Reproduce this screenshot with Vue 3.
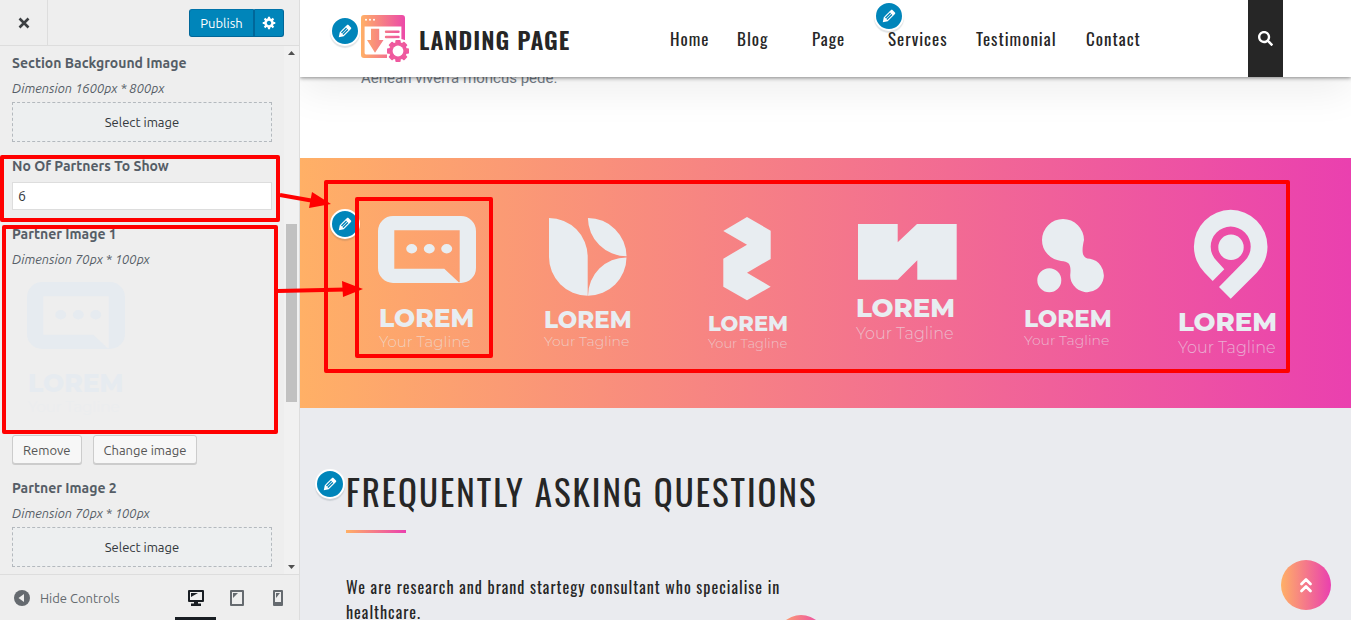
<script setup>
import { ref } from 'vue'

const partnerCount = ref('6')

const navLinks = ['Home', 'Blog', 'Page', 'Services', 'Testimonial', 'Contact']

const pencil =
  'M13.89 3.39l2.71 2.72c.46.46.42 1.24.03 1.64l-8.01 8.02-5.56 1.16 1.16-5.58s7.6-7.63 7.99-8.03c.39-.39 1.22-.39 1.68.07zm-2.73 2.79l-5.59 5.61 1.11 1.11 5.54-5.65zm-2.97 8.23l5.58-5.6-1.07-1.08-5.59 5.6z'

const chatShape =
  'M46 18H114A15 15 0 0 1 129 33V70A15 15 0 0 1 114 85H46A15 15 0 0 1 31 70V33A15 15 0 0 1 46 18ZM47.3 32.3V70.7H97.3L112 84.6L112.7 84V32.3Z M59.2 50.7a5.5 4.7 0 1 0 11 0a5.5 4.7 0 1 0 -11 0Z M76.8 50.7a5.5 4.7 0 1 0 11 0a5.5 4.7 0 1 0 -11 0Z M94.2 50.7a5.5 4.7 0 1 0 11 0a5.5 4.7 0 1 0 -11 0Z'

const partners = [
  { shape: chatShape, x: 32, nameY: 129, nameSize: 25, tagY: 149, tagSize: 15 },
  {
    shape:
      'M42 20A38.7 38.7 0 0 1 80.7 58.7V97.7A38.7 38.7 0 0 1 42 58.7Z M80.9 20A38.5 38.5 0 0 1 119.5 58.2A38.5 38.5 0 0 1 80.9 20Z M119.5 59.4A38.5 38.5 0 0 1 81 97.7A38.5 38.5 0 0 1 119.5 59.4Z',
    x: 37, nameY: 130, nameSize: 23, tagY: 148, tagSize: 14
  },
  {
    shape:
      'M80 19L103.7 32.7V61L80 74.7L103.7 88.7L80 102.3L56.3 88.7V60.7L80 46.7L56.3 33Z',
    x: 41, nameY: 133, nameSize: 21, tagY: 150, tagSize: 13
  },
  {
    shape:
      'M31 26H70.7V44.3L90 26H129.7V81.7H90.3V62.3L70.7 81.7H31Z',
    x: 29, nameY: 119, nameSize: 26, tagY: 141, tagSize: 16
  },
  {
    shape:
      'M55 42a21 21 0 1 1 42 0C94.5 53 94.5 60.5 103 60.8A16.8 16.8 0 1 1 83.4 75C84 66 82 63.5 74 62.9A21 21 0 0 1 55 42Z M50.3 82.3a12 12 0 1 0 24 0a12 12 0 1 0 -24 0Z',
    x: 37, nameY: 129, nameSize: 23, tagY: 147, tagSize: 14
  },
  {
    shape:
      'M83.7 100.7L72 89L97.8 62.8A20 20 0 1 0 69.6 62.8L77.3 71.3L65.7 83L57.7 74.7A36.8 36.8 0 1 1 109.7 74.7Z M71.3 49.3a12.7 12.7 0 1 0 25.4 0a12.7 12.7 0 1 0 -25.4 0Z',
    x: 31, nameY: 133, nameSize: 26, tagY: 155, tagSize: 16
  }
]

const gearTeeth = [0, 45, 90, 135, 180, 225, 270, 315]
</script>

<template>
  <div class="customizer">
    <aside class="sidebar">
      <header class="sidebar-head">
        <button class="close" type="button" aria-label="Close">
          <svg width="12" height="12" viewBox="0 0 12 12"><path d="M1.5 1.5L10.5 10.5M10.5 1.5L1.5 10.5" stroke="#3c3f42" stroke-width="2.6" /></svg>
        </button>
        <div class="publish-group">
          <button class="publish" type="button">Publish</button>
          <button class="settings" type="button" aria-label="Publish settings">
            <svg width="14" height="14" viewBox="0 1 19 19"><path fill="#fff" d="M18 12h-2.18c-.17.7-.44 1.35-.81 1.93l1.54 1.54-2.1 2.1-1.54-1.54c-.58.36-1.23.63-1.91.79V19H8v-2.18c-.68-.16-1.33-.43-1.91-.79l-1.54 1.54-2.12-2.12 1.54-1.54c-.36-.58-.63-1.23-.79-1.91H1V9.03h2.17c.16-.7.44-1.35.8-1.94L2.43 5.55l2.1-2.1 1.54 1.54c.58-.37 1.24-.64 1.93-.81V2h3v2.18c.68.16 1.33.43 1.91.79l1.54-1.54 2.12 2.12-1.54 1.54c.36.59.64 1.24.8 1.94H18V12zm-8.5 1.5c1.66 0 3-1.34 3-3s-1.34-3-3-3-3 1.34-3 3 1.34 3 3 3z" /></svg>
          </button>
        </div>
      </header>

      <div class="sidebar-body">
        <div class="controls">
          <section class="control">
            <h3>Section Background Image</h3>
            <p class="hint">Dimension 1600px * 800px</p>
            <button class="select-image" type="button">Select image</button>
          </section>
          <section class="control">
            <label class="title" for="partner-count">No Of Partners To Show</label>
            <input id="partner-count" v-model="partnerCount" type="text" />
          </section>
          <section class="control">
            <h3>Partner Image 1</h3>
            <p class="hint">Dimension 70px * 100px</p>
            <svg class="thumb" width="144" height="151" viewBox="16 9 144 151">
              <path :d="chatShape" fill="#e6ebf0" fill-rule="evenodd" />
              <text class="logo-name" x="32" y="128" font-size="25" fill="#e6ebf0">LOREM</text>
              <text class="logo-tag" x="32" y="148" font-size="15" fill="#ebedef">Your Tagline</text>
            </svg>
            <div class="actions">
              <button type="button">Remove</button>
              <button type="button">Change image</button>
            </div>
          </section>
          <section class="control">
            <h3>Partner Image 2</h3>
            <p class="hint">Dimension 70px * 100px</p>
            <button class="select-image" type="button">Select image</button>
          </section>
        </div>
        <div class="scrollbar">
          <svg width="7" height="4" viewBox="0 0 7 4"><path d="M0 4L3.5 0L7 4Z" fill="#505050" /></svg>
          <div class="track"><div class="thumb-bar"></div></div>
          <svg width="7" height="4" viewBox="0 0 7 4"><path d="M0 0L3.5 4L7 0Z" fill="#505050" /></svg>
        </div>
      </div>

      <footer class="sidebar-foot">
        <button class="hide" type="button">
          <svg width="16" height="16" viewBox="0 0 16 16"><circle cx="8" cy="8" r="8" fill="#656a6f" /><path d="M10 4V12L4.5 8Z" fill="#eee" /></svg>
          <span>Hide Controls</span>
        </button>
        <div class="devices">
          <button class="active" type="button" aria-label="Desktop preview">
            <svg width="16" height="16" viewBox="0 0 16 16" fill="#191e23"><path fill-rule="evenodd" d="M1 0H15Q16 0 16 1V11Q16 12 15 12H10V13.5H13V16H3V13.5H6V12H1Q0 12 0 11V1Q0 0 1 0ZM2 2V10H14V2Z" /><path d="M3 3H10L3 7Z" /></svg>
          </button>
          <button type="button" aria-label="Tablet preview">
            <svg width="16" height="16" viewBox="0 0 16 16" fill="#656a6f"><path fill-rule="evenodd" d="M2 0H14Q15 0 15 1V15Q15 16 14 16H2Q1 16 1 15V1Q1 0 2 0ZM3 2V14H13V2Z" /><path d="M4 3H9L4 8Z" /></svg>
          </button>
          <button type="button" aria-label="Mobile preview">
            <svg width="16" height="16" viewBox="0 0 16 16" fill="#656a6f"><path fill-rule="evenodd" d="M4 0H12Q13 0 13 1V15Q13 16 12 16H4Q3 16 3 15V1Q3 0 4 0ZM5 2V12H11V2Z" /><path d="M6 3H10L6 8Z" /></svg>
          </button>
        </div>
      </footer>
    </aside>

    <main class="preview">
      <header class="site-head">
        <a class="brand" href="#">
          <svg width="48" height="47" viewBox="0 0 48 47">
            <defs>
              <linearGradient id="brand-fill" gradientUnits="userSpaceOnUse" x1="0" y1="0" x2="48" y2="0">
                <stop offset="0" stop-color="#ffb066" />
                <stop offset="1" stop-color="#ea40af" />
              </linearGradient>
            </defs>
            <path fill="url(#brand-fill)" fill-rule="evenodd" d="M3 0H41Q44 0 44 3V43H3Q0 43 0 40V3Q0 0 3 0ZM3.6 11.5V38Q3.6 39.4 5 39.4H40.4V11.5Z" />
            <g fill="#fff"><circle cx="5" cy="4.8" r="1" /><circle cx="9" cy="4.8" r="1" /><circle cx="13" cy="4.8" r="1" /></g>
            <path fill="url(#brand-fill)" d="M10 13.7H18.200V25H22.5L14 37.8L6 25H10Z" />
            <path fill="url(#brand-fill)" d="M25 15.500H37.500a1.200 1.200 0 0 1 0 2.400H25a1.200 1.200 0 0 1 0 -2.400ZM25 20.800H37.500a1.200 1.200 0 0 1 0 2.400H25a1.200 1.200 0 0 1 0 -2.400Z" />
            <path fill="#fff" d="M26 27Q36 20 48 27V47H26Z" />
            <g fill="url(#brand-fill)">
              <circle cx="37" cy="36" r="9" />
              <rect v-for="a in gearTeeth" :key="a" x="34.3" y="25" width="5.4" height="6" rx="1" :transform="`rotate(${a} 37 36)`" />
            </g>
            <circle cx="37" cy="36" r="5.4" fill="#fff" />
          </svg>
          <span>LANDING PAGE</span>
        </a>
        <button class="edit edit-brand" type="button" aria-label="Edit logo"><svg width="18" height="18" viewBox="0 0 20 20"><path :d="pencil" /></svg></button>
        <nav>
          <a v-for="link in navLinks" :key="link" href="#">{{ link }}</a>
        </nav>
        <button class="edit edit-menu" type="button" aria-label="Edit menu"><svg width="18" height="18" viewBox="0 0 20 20"><path :d="pencil" /></svg></button>
        <button class="search" type="button" aria-label="Search">
          <svg width="15" height="15" viewBox="0 0 512 512"><path fill="#fff" d="M505 442.7L405.3 343c-4.5-4.5-10.6-7-17-7H372c27.6-35.3 44-79.7 44-128C416 93.1 322.9 0 208 0S0 93.1 0 208s93.1 208 208 208c48.3 0 92.7-16.4 128-44v16.3c0 6.4 2.5 12.5 7 17l99.7 99.7c9.4 9.4 24.6 9.4 33.9 0l28.3-28.3c9.4-9.4 9.4-24.6.1-34zM208 336c-70.7 0-128-57.2-128-128 0-70.7 57.2-128 128-128 70.7 0 128 57.2 128 128 0 70.7-57.2 128-128 128z" /></svg>
        </button>
      </header>

      <section class="intro"><p>Aenean viverra rhoncus pede.</p></section>

      <section class="partners">
        <svg v-for="(p, i) in partners" :key="i" width="160" height="160" viewBox="0 0 160 160">
          <path :d="p.shape" fill="#e8edf1" fill-rule="evenodd" />
          <text class="logo-name" :x="p.x" :y="p.nameY" :font-size="p.nameSize" fill="#e8edf1">LOREM</text>
          <text class="logo-tag" :x="p.x" :y="p.tagY" :font-size="p.tagSize" fill="#e8edf1" fill-opacity="0.6">Your Tagline</text>
        </svg>
        <button class="edit edit-partners" type="button" aria-label="Edit partners"><svg width="18" height="18" viewBox="0 0 20 20"><path :d="pencil" /></svg></button>
      </section>

      <section class="faq">
        <button class="edit edit-faq" type="button" aria-label="Edit questions"><svg width="18" height="18" viewBox="0 0 20 20"><path :d="pencil" /></svg></button>
        <h2>FREQUENTLY ASKING QUESTIONS</h2>
        <div class="rule"></div>
        <p>We are research and brand startegy consultant who specialise in healthcare.</p>
        <span class="faq-dot"></span>
      </section>

      <a class="to-top" href="#" aria-label="Back to top">
        <svg width="14" height="16" viewBox="0 0 14 16" fill="none" stroke="#fff" stroke-width="2.8" stroke-linecap="round" stroke-linejoin="round"><path d="M2.5 7L7 2.5L11.5 7M2.5 14L7 9.5L11.5 14" /></svg>
      </a>
    </main>

    <svg class="marks" width="1351" height="620" viewBox="0 0 1351 620" fill="none" stroke="#f00" stroke-width="4" stroke-linejoin="round">
      <rect x="2" y="157" width="276" height="63" />
      <rect x="4" y="227" width="272" height="205" />
      <rect x="326" y="182" width="962" height="189" />
      <rect x="357" y="199" width="134" height="157" />
      <path d="M280 195L314 201M278 291L346 289.500" />
      <path fill="#f00" stroke="none" d="M312 192L331 204L309 208ZM342 281L363 289L343 297Z" />
    </svg>
  </div>
</template>

<style>
body {
  margin: 0;
  overflow: hidden;
}
</style>

<style scoped>
.customizer {
  position: relative;
  display: flex;
  height: 100vh;
  overflow: hidden;
  background: #fff;
}
* {
  box-sizing: border-box;
}
button {
  font: inherit;
  padding: 0;
  cursor: pointer;
}
svg {
  display: block;
  flex: none;
}
h2,
h3,
p {
  margin: 0;
}

.sidebar {
  flex: 0 0 300px;
  display: flex;
  flex-direction: column;
  border-right: 1px solid #ddd;
  background: #eee;
  color: #555d66;
  font: 13px/24px Ubuntu, "Noto Sans", sans-serif;
}
.sidebar-head {
  flex: 0 0 46px;
  display: flex;
  align-items: stretch;
  justify-content: space-between;
  border-bottom: 1px solid #ddd;
}
.close {
  width: 48px;
  display: grid;
  place-items: center;
  border: 0;
  border-right: 1px solid #ddd;
  background: none;
}
.publish-group {
  display: flex;
  align-self: center;
  height: 28px;
  margin-right: 15px;
}
.publish,
.settings {
  border: 1px solid #006799;
  background: #0085ba;
  color: #fff;
  border-color: #0073aa #006799 #006799;
}
.publish {
  width: 65px;
  border-radius: 3px 0 0 3px;
}
.settings {
  width: 30px;
  display: grid;
  place-items: center;
  border-radius: 0 3px 3px 0;
}
.sidebar-body {
  flex: 1;
  min-height: 0;
  display: flex;
}
.controls {
  flex: 1;
  padding: 5px 12px 0;
  overflow: hidden;
}
.control {
  margin-bottom: 12px;
}
h3,
.title {
  display: block;
  font-size: 14px;
  font-weight: 700;
  line-height: 24px;
}
.hint {
  font-style: italic;
  line-height: 27px;
}
.select-image {
  display: block;
  width: 100%;
  height: 40px;
  border: 1px dashed #b4b9be;
  background: #edeff0;
  color: #32373c;
}
input {
  display: block;
  width: 100%;
  height: 28px;
  margin-top: 4px;
  padding: 0 5px;
  border: 1px solid #ddd;
  background: #fff;
  color: #32373c;
  font: inherit;
  font-size: 14px;
}
.thumb {
  margin-bottom: 11px;
}
.actions {
  display: flex;
  gap: 11px;
}
.actions button {
  height: 29px;
  padding: 0 10px;
  border: 1px solid #ccc;
  border-radius: 3px;
  background: #f7f7f7;
  box-shadow: 0 1px 0 #ccc;
  color: #555;
}
.scrollbar {
  flex: 0 0 15px;
  display: flex;
  flex-direction: column;
  align-items: center;
  padding: 5px 0;
  background: #f1f1f1;
}
.track {
  flex: 1;
  padding-top: 169px;
}
.thumb-bar {
  width: 11px;
  height: 178px;
  background: #c1c1c1;
}
.sidebar-foot {
  flex: 0 0 46px;
  display: flex;
  justify-content: space-between;
  border-top: 1px solid #ddd;
}
.hide {
  display: flex;
  align-items: center;
  gap: 10px;
  padding: 0 0 0 14px;
  border: 0;
  background: none;
  color: #656a6f;
}
.devices {
  display: flex;
  padding-right: 1px;
}
.devices button {
  width: 41px;
  display: grid;
  place-items: center;
  border: 0;
  border-top: 3px solid transparent;
  border-bottom: 3px solid transparent;
  background: none;
}
.devices .active {
  border-bottom-color: #191e23;
}

.preview {
  position: relative;
  flex: 1;
  min-width: 0;
  display: flex;
  flex-direction: column;
  overflow: hidden;
  color: #262626;
  font-family: Oswald, "Liberation Sans Narrow", "DejaVu Sans Condensed", sans-serif;
}
.site-head {
  position: relative;
  z-index: 1;
  flex: 0 0 77px;
  display: grid;
  grid-template-columns: 309px 1fr 35px;
  padding: 0 68px 0 61px;
  background: #fff;
  box-shadow: 0 1px 4px rgba(0, 0, 0, 0.45), 0 14px 40px rgba(0, 0, 0, 0.07);
}
.brand {
  display: flex;
  align-items: center;
  gap: 10px;
  color: inherit;
  font-size: 24px;
  font-weight: 600;
  letter-spacing: 1px;
  text-decoration: none;
  white-space: nowrap;
}
nav {
  display: grid;
  grid-template-columns: 67px 75px 76px 88px 110px 60px;
  align-items: center;
}
nav a {
  color: inherit;
  font-size: 17px;
  letter-spacing: 1px;
  text-decoration: none;
}
.search {
  display: grid;
  place-items: center;
  border: 0;
  background: #262626;
}
.intro {
  flex: 0 0 81px;
  padding-left: 61px;
  color: #747d88;
  font: 15px/24px Roboto, sans-serif;
}
.intro p {
  margin-top: -11px;
}
.partners {
  position: relative;
  flex: 0 0 250px;
  display: grid;
  grid-template-columns: repeat(6, 160px);
  padding: 40px 0 0 47px;
  background: linear-gradient(to right, #ffb066, #ea40af);
}
.logo-name {
  font-family: Montserrat, Inter, sans-serif;
  font-weight: 800;
}
.logo-tag {
  font-family: Montserrat, Inter, sans-serif;
  font-weight: 300;
}
.faq {
  position: relative;
  flex: 1;
  padding: 56px 46px 0;
  background: #eaebef;
}
.faq h2 {
  font-size: 35px;
  font-weight: 400;
  line-height: 54px;
  letter-spacing: 2px;
  white-space: nowrap;
}
.rule {
  width: 60px;
  height: 3px;
  margin: 12px 0 42px;
  background: linear-gradient(to right, #ffb066, #ea40af);
}
.faq p {
  max-width: 450px;
  font-size: 16px;
  line-height: 25px;
  letter-spacing: 1px;
}
.faq-dot,
.to-top {
  position: absolute;
  width: 50px;
  height: 50px;
  border-radius: 50%;
  background: linear-gradient(to right, #ffb066, #ea40af);
}
.faq-dot {
  left: 476px;
  top: 207px;
}
.to-top {
  right: 20px;
  bottom: 10px;
  display: grid;
  place-items: center;
}
.edit {
  position: absolute;
  width: 30px;
  height: 30px;
  display: grid;
  place-items: center;
  border: 2px solid #fff;
  border-radius: 50%;
  background: #0085ba;
  box-shadow: 0 2px 1px rgba(46, 68, 83, 0.15);
}
.edit path {
  fill: #fff;
}
.edit-brand {
  left: 30px;
  top: 16px;
}
.edit-menu {
  left: 574px;
  top: 1px;
}
.edit-partners {
  left: 30px;
  top: 51px;
}
.edit-faq {
  left: 15px;
  top: 61px;
}
.marks {
  position: absolute;
  left: 0;
  top: 0;
  pointer-events: none;
}
</style>
